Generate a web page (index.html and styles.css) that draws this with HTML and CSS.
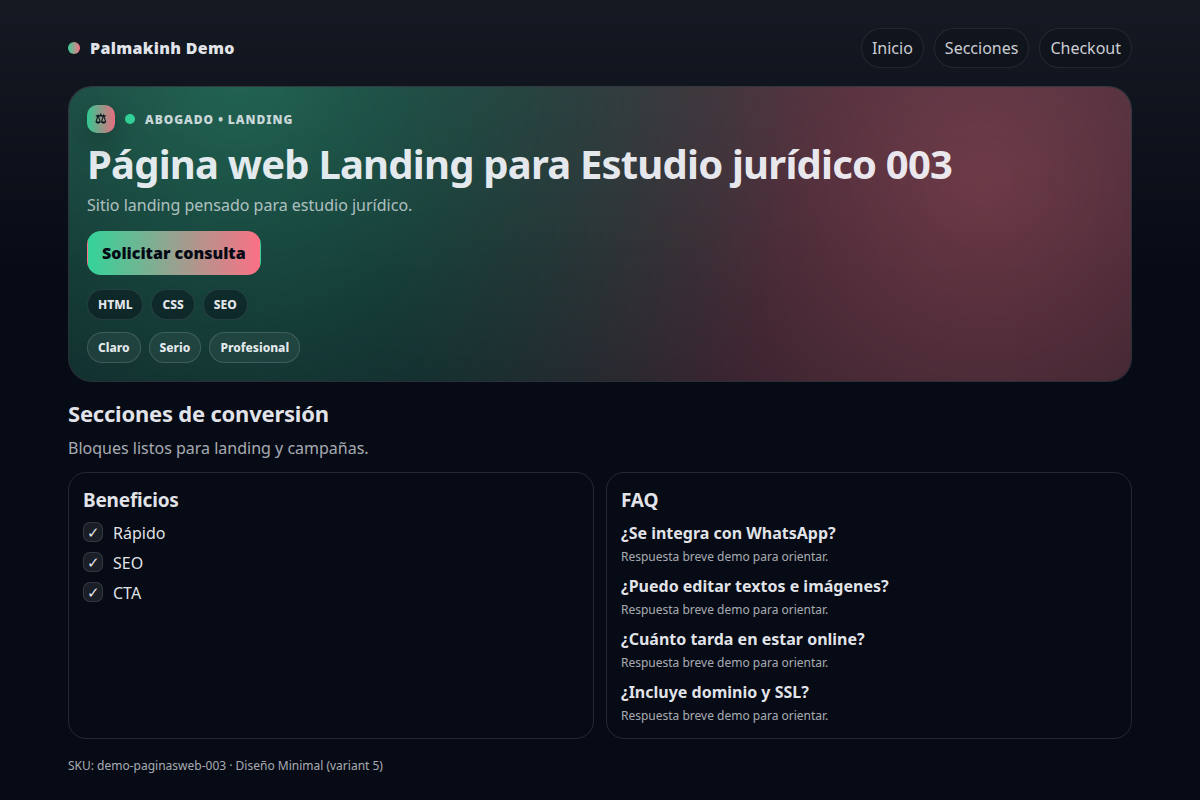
FILE: index.html
```
<!DOCTYPE html>
<html lang="es">
<head>
    <meta charset="UTF-8">
    <meta name="viewport" content="width=device-width, initial-scale=1">
    <title>Página web Landing para Estudio jurídico 003</title>
    <link rel="stylesheet" href="styles.css">
</head>
<body>
<div class="wrap">
    <header class="top">
        <div class="brand"><span class="dot"></span>Palmakinh Demo</div>
        <nav class="nav">
            <a href="#inicio">Inicio</a>
            <a href="#secciones">Secciones</a>
            <a href="#checkout">Checkout</a>
        </nav>
    </header>

    <section class="hero" id="inicio">
        <div class="hero-in">
            <div class="kicker">
                <span class="ico">⚖</span>
                <span class="kdot"></span>
                <span class="ktext">Abogado • Landing</span>
            </div>
            <h1>Página web Landing para Estudio jurídico 003</h1>
            <p class="sub">Sitio landing pensado para estudio jurídico.</p>
            <a class="btn" id="checkout" href="#checkout">Solicitar consulta</a>
            <div class="chips">
                <span class="chip">HTML</span>
                <span class="chip">CSS</span>
                <span class="chip">SEO</span>
            </div>
            <div class="chips tone">
                <span class="chip">Claro</span>
                <span class="chip">Serio</span>
                <span class="chip">Profesional</span>
            </div>
        </div>
    </section>

    <main id="secciones">
        <h2>Secciones de conversión</h2>
        <p class="muted">Bloques listos para landing y campañas.</p>
        <div class="grid">
            <article class="card">
                <h3>Beneficios</h3>
                <ul class="list">
                    <li><span class="check">✓</span>Rápido</li>
                    <li><span class="check">✓</span>SEO</li>
                    <li><span class="check">✓</span>CTA</li>
                </ul>
            </article>
            <article class="card">
                <h3>FAQ</h3>
                <dl class="faq">
                    <dt>¿Se integra con WhatsApp?</dt>
                    <dd>Respuesta breve demo para orientar.</dd>
                    <dt>¿Puedo editar textos e imágenes?</dt>
                    <dd>Respuesta breve demo para orientar.</dd>
                    <dt>¿Cuánto tarda en estar online?</dt>
                    <dd>Respuesta breve demo para orientar.</dd>
                    <dt>¿Incluye dominio y SSL?</dt>
                    <dd>Respuesta breve demo para orientar.</dd>
                </dl>
            </article>
        </div>
    </main>

    <footer class="foot">SKU: demo-paginasweb-003 · Diseño Minimal (variant 5)</footer>
</div>
</body>
</html>
```
FILE: styles.css
```
:root {
    --bg: #060b15;
    --text: rgba(248, 250, 255, .92);
    --muted: rgba(248, 250, 255, .68);
    --line: rgba(255, 255, 255, .12);
    --a: #34d399;
    --b: #fb7185;
}

* {
    box-sizing: border-box;
}

body {
    margin: 0;
    min-height: 100vh;
    font-family: "Noto Sans", sans-serif;
    font-size: 16px;
    line-height: 22px;
    color: var(--text);
    background: linear-gradient(180deg, rgba(255, 255, 255, .06), transparent 35%) var(--bg);
}

h1, h2, h3, p, ul, dl, dd {
    margin: 0;
    padding: 0;
}

a {
    color: inherit;
    text-decoration: none;
}

.wrap {
    max-width: 1100px;
    margin: 0 auto;
    padding: 28px 18px 24px;
}

.top {
    display: flex;
    align-items: center;
    justify-content: space-between;
    margin-bottom: 18px;
}

.brand {
    display: flex;
    align-items: center;
    gap: 10px;
    font-weight: 900;
    letter-spacing: .02em;
}

.dot {
    width: 12px;
    height: 12px;
    border-radius: 50%;
    background: linear-gradient(90deg, var(--a), var(--b));
}

.nav {
    display: flex;
    gap: 10px;
}

.nav a {
    padding: 8px 10px;
    border: 1px solid rgba(255, 255, 255, .08);
    border-radius: 20px;
    background: rgba(0, 0, 0, .1);
    color: rgba(248, 250, 255, .82);
}

/* hero */
.hero {
    position: relative;
    overflow: hidden;
    padding: 18px;
    border: 1px solid var(--line);
    border-radius: 24px;
    background: rgba(255, 255, 255, .03);
}

.hero::before {
    content: "";
    position: absolute;
    inset: -40%;
    background:
        radial-gradient(circle at 31% 20%, var(--a), transparent 42%),
        radial-gradient(circle at 70% 40%, var(--b), transparent 45%);
    filter: blur(18px);
    opacity: .4;
}

.hero-in {
    position: relative;
    display: flex;
    flex-direction: column;
    align-items: flex-start;
}

.kicker {
    display: flex;
    align-items: center;
    gap: 10px;
    line-height: 24px;
}

.ico {
    width: 28px;
    height: 28px;
    border-radius: 10px;
    background: linear-gradient(90deg, var(--a), var(--b));
    box-shadow: 0 10px 24px rgba(0, 0, 0, .25);
    color: #050914;
    font-size: 13px;
    line-height: 26px;
    font-weight: 900;
    text-align: center;
    opacity: .92;
}

.kdot {
    width: 10px;
    height: 10px;
    border-radius: 50%;
    background: var(--a);
}

.ktext {
    padding-top: 1px;
    font-size: 12px;
    font-weight: 900;
    letter-spacing: .08em;
    text-transform: uppercase;
    color: rgba(248, 250, 255, .78);
}

h1 {
    margin-top: 8px;
    font-size: 40px;
    line-height: 46px;
    font-weight: 700;
    letter-spacing: -.02em;
}

.sub {
    margin: 7px 0 15px;
    color: var(--muted);
}

.btn {
    padding: 10px 14px;
    border: 1px solid transparent;
    border-radius: 14px;
    background: linear-gradient(90deg, var(--a), var(--b));
    color: #050914;
    font-weight: 900;
}

.chips {
    display: flex;
    flex-wrap: wrap;
    gap: 8px;
    margin-top: 14px;
}

.chip {
    padding: 6px 10px;
    border: 1px solid rgba(255, 255, 255, .1);
    border-radius: 16px;
    background: rgba(5, 9, 20, .4);
    font-size: 12px;
    line-height: 17px;
    font-weight: 800;
}

.tone {
    margin-top: 12px;
}

.tone .chip {
    border-color: rgba(255, 255, 255, .14);
    background: rgba(255, 255, 255, .05);
}

/* sections */
h2 {
    margin-top: 16px;
    font-size: 22px;
    line-height: 30px;
    letter-spacing: -.01em;
}

.muted {
    margin: 9px 0 13px;
    color: var(--muted);
}

.grid {
    display: grid;
    grid-template-columns: 1fr 1fr;
    gap: 12px;
}

.card {
    padding: 14px;
    border: 1px solid var(--line);
    border-radius: 18px;
}

h3 {
    margin-bottom: 9px;
    font-size: 19px;
    line-height: 26px;
    letter-spacing: -.01em;
}

.list {
    display: grid;
    gap: 8px;
    list-style: none;
}

.list li {
    display: flex;
    gap: 10px;
}

.check {
    width: 20px;
    height: 20px;
    border: 1px solid var(--line);
    border-radius: 7px;
    background: rgba(255, 255, 255, .08);
    font-size: 15px;
    line-height: 18px;
    text-align: center;
}

.faq dt {
    font-weight: 700;
}

.faq dd {
    margin: 4px 0 10px;
    font-size: 12px;
    line-height: 17px;
    color: var(--muted);
}

.faq dd:last-child {
    margin-bottom: 0;
}

.foot {
    margin-top: 18px;
    font-size: 12px;
    line-height: 17px;
    color: var(--muted);
}

@media (max-width: 720px) {
    .grid {
        grid-template-columns: 1fr;
    }
}
```
